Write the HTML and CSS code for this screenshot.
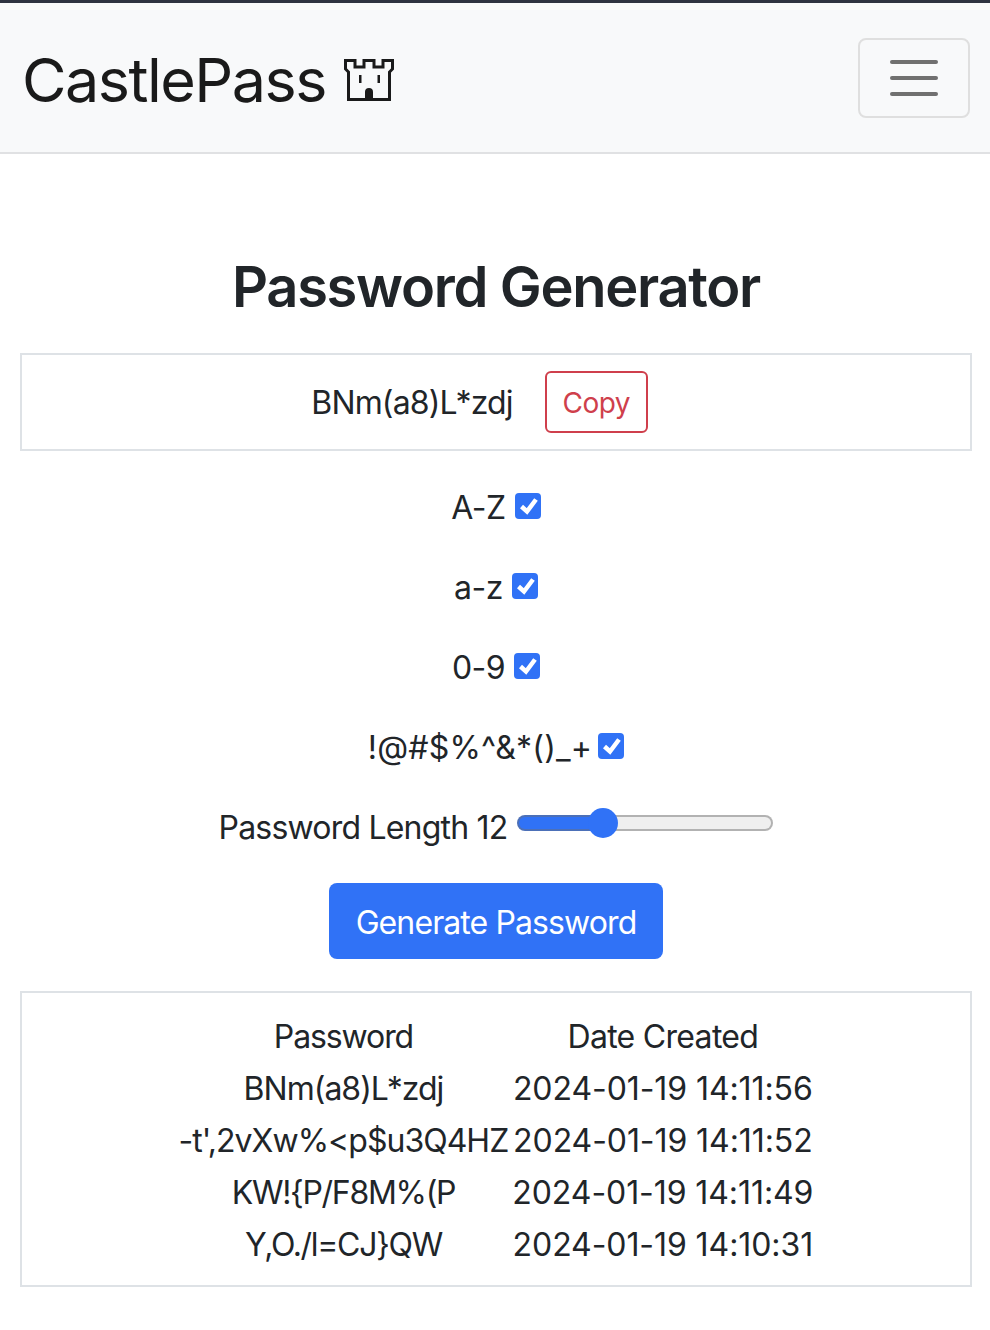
FILE: index.html
```html
<!DOCTYPE html>
<html>

<head>
  <title>CastlePass</title>
  <link rel="stylesheet" href="styles.css">
</head>

<body>
  <div id="topline"></div>
  <nav id="bar">
    <a id="brand" href="#">CastlePass
      <svg id="castle" width="50" height="42" viewBox="0 0 50 42">
        <path d="M1.5 1.5H11V8H20V1.5H30V8H39V1.5H48.5V10L45.5 13V40.5H4.5V13L1.5 10Z" fill="none" stroke="#1a1a1a" stroke-width="3" />
        <path d="M15 16H17.5V24H15ZM33.5 16H36V24H33.5ZM21 42V33A4 4 0 0 1 29 33V42Z" fill="#1a1a1a" />
      </svg>
    </a>
    <button id="toggler"><span></span><span></span><span></span></button>
  </nav>

  <div id="content">
    <h1>Password Generator</h1>

    <div class="box" id="result">
      <span>BNm(a8)L*zdj</span>
      <button id="copy">Copy</button>
    </div>

    <div class="row"><label for="upper">A-Z</label><input type="checkbox" id="upper" checked></div>
    <div class="row"><label for="lower">a-z</label><input type="checkbox" id="lower" checked></div>
    <div class="row"><label for="digits">0-9</label><input type="checkbox" id="digits" checked></div>
    <div class="row"><label for="symbols" class="symbols">!@#$%^&amp;*()_+</label><input type="checkbox" id="symbols" checked></div>
    <div class="row">
      <label for="length" class="tight">Password Length 12</label>
      <input type="range" id="length" min="4" max="30" value="12">
    </div>

    <button id="generate">Generate Password</button>

    <div class="box" id="history">
      <table>
        <tr><th>Password</th><th>Date Created</th></tr>
        <tr><td>BNm(a8)L*zdj</td><td>2024-01-19 14:11:56</td></tr>
        <tr><td>-t',2vXw%&lt;p$u3Q4HZ</td><td>2024-01-19 14:11:52</td></tr>
        <tr><td class="narrow">KW!{P/F8M%(P</td><td>2024-01-19 14:11:49</td></tr>
        <tr><td class="narrow">Y,O./l=CJ}QW</td><td>2024-01-19 14:10:31</td></tr>
      </table>
    </div>
  </div>
</body>

</html>
```

FILE: styles.css
```css
* {
  box-sizing: border-box;
}

body {
  margin: 0;
  font-family: Inter, "Liberation Sans", sans-serif;
  font-size: 32px;
  line-height: 48px;
  color: #212529;
  background-color: #fff;
  letter-spacing: -0.5px;
}

#topline {
  height: 3px;
  background-color: #2d3240;
}

#bar {
  height: 151px;
  display: flex;
  align-items: center;
  justify-content: space-between;
  padding: 0 20px 0 22px;
  background-color: #f8f9fa;
  border-bottom: solid 2px #e0e1e3;
}

#brand {
  display: flex;
  align-items: center;
  gap: 18px;
  margin-top: 4px;
  font-size: 61px;
  letter-spacing: -1.5px;
  color: #1a1a1a;
  text-decoration: none;
}

#toggler {
  width: 112px;
  height: 80px;
  display: flex;
  flex-direction: column;
  align-items: center;
  justify-content: center;
  gap: 12px;
  padding: 0;
  background: transparent;
  border: solid 2px #dfdfdf;
  border-radius: 8px;
}

#toggler span {
  width: 48px;
  height: 4px;
  border-radius: 2px;
  background-color: #707070;
}

#content {
  display: flex;
  flex-direction: column;
  align-items: center;
  padding: 0 18px 0 20px;
}

h1 {
  margin: 95px 0 28px;
  font-size: 56px;
  line-height: 76px;
  font-weight: 600;
  letter-spacing: -1.3px;
}

.box {
  width: 100%;
  border: solid 2px #dee2e6;
}

#result {
  height: 98px;
  display: flex;
  align-items: center;
  justify-content: center;
  gap: 32px;
  margin-bottom: 32px;
  padding-right: 33px;
  letter-spacing: -0.85px;
}

#result span {
  padding-top: 2px;
}

#copy {
  height: 62px;
  width: 103px;
  padding: 2px 0 0;
  font-family: inherit;
  font-size: 28px;
  letter-spacing: -0.6px;
  color: #cf3f4c;
  background: transparent;
  border: solid 2px #cf3f4c;
  border-radius: 6px;
}

.row {
  height: 48px;
  margin-bottom: 32px;
  display: flex;
  align-items: center;
  gap: 9px;
}

.row label {
  padding-top: 2px;
}

.symbols {
  margin-right: -3px;
  letter-spacing: 0.2px;
}

.tight {
  letter-spacing: -0.8px;
}

input[type="checkbox"] {
  appearance: none;
  width: 26px;
  height: 26px;
  margin: 0 0 2px;
  border-radius: 4px;
  background-color: #3072f6;
  background-image: url("data:image/svg+xml,%3Csvg xmlns='http://www.w3.org/2000/svg' viewBox='0 0 26 26'%3E%3Cpath d='M6.5 13.5L12 18.5L21 6.5' fill='none' stroke='white' stroke-width='4.5'/%3E%3C/svg%3E");
}

input[type="range"] {
  appearance: none;
  width: 256px;
  height: 32px;
  margin: 0 0 8px 1px;
  background: transparent;
}

input[type="range"]::-webkit-slider-runnable-track {
  height: 16px;
  border: solid 2px transparent;
  border-radius: 8px;
  background:
    linear-gradient(to right, #3072f6 78px, #efefef 78px) padding-box,
    linear-gradient(to right, #4c70b8 80px, #b2b2b2 80px) border-box;
}

input[type="range"]::-webkit-slider-thumb {
  appearance: none;
  width: 30px;
  height: 30px;
  margin-top: -9px;
  border-radius: 50%;
  background-color: #3072f6;
}

#generate {
  width: 334px;
  height: 76px;
  padding: 2px 0 0;
  margin-bottom: 32px;
  font-family: inherit;
  font-size: 32px;
  letter-spacing: -0.9px;
  color: #fff;
  background-color: #3072f6;
  border: none;
  border-radius: 8px;
}

#history {
  display: flex;
  justify-content: center;
  padding: 16px 0 13px;
}

table {
  border-spacing: 4px 3px;
}

th {
  padding: 1px 0 0;
  font-weight: 400;
  text-align: center;
  letter-spacing: -0.7px;
}

th:first-child {
  letter-spacing: -1.1px;
}

td {
  padding: 1px 0 0;
  text-align: center;
  letter-spacing: -0.08px;
}

td:first-child {
  letter-spacing: -0.98px;
}

td.narrow {
  letter-spacing: -1.3px;
}
```
